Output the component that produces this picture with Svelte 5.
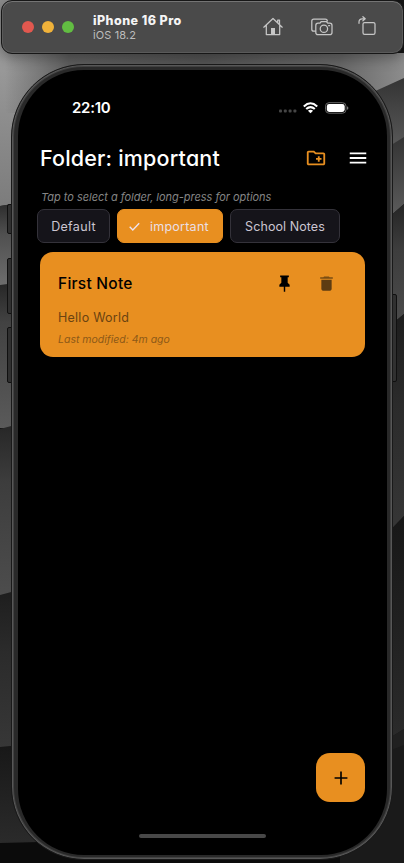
<script>
  const folders = [
    { name: 'Default', width: 73, spacing: 0.32 },
    { name: 'important', width: 106, spacing: 0.24, selected: true },
    { name: 'School Notes', width: 110, spacing: 0.08 }
  ];
</script>

<div class="desktop">
  <svg class="wallpaper" viewBox="0 0 404 863" aria-hidden="true">
    <defs>
      <linearGradient id="a" x2="0" y2="1"><stop stop-color="#8c8c8c"/><stop offset=".3" stop-color="#9a9a9a"/><stop offset=".6" stop-color="#8c8c8c"/><stop offset="1" stop-color="#7c7c7c"/></linearGradient>
      <linearGradient id="b" x2="0" y2="1"><stop stop-color="#292929"/><stop offset=".4" stop-color="#505050"/><stop offset="1" stop-color="#6d6d6d"/></linearGradient>
      <linearGradient id="c" x2="0" y2="1"><stop stop-color="#252525"/><stop offset=".28" stop-color="#424242"/><stop offset="1" stop-color="#5a5a5a"/></linearGradient>
      <linearGradient id="d" x2="0" y2="1"><stop stop-color="#252525"/><stop offset=".35" stop-color="#3d3d3d"/><stop offset="1" stop-color="#4d4d4d"/></linearGradient>
      <linearGradient id="e" x2="0" y2="1"><stop stop-color="#1d1d1d"/><stop offset=".4" stop-color="#2b2b2b"/><stop offset="1" stop-color="#373737"/></linearGradient>
      <linearGradient id="f" x2="0" y2="1"><stop stop-color="#171717"/><stop offset="1" stop-color="#2b2b2b"/></linearGradient>
      <linearGradient id="g" x2="0" y2="1"><stop stop-color="#343434"/><stop offset="1" stop-color="#606060"/></linearGradient>
      <linearGradient id="top"><stop stop-color="#5f5f5f" stop-opacity="0"/><stop offset=".16" stop-color="#5f5f5f"/><stop offset=".5" stop-color="#555"/><stop offset=".84" stop-color="#686868"/><stop offset="1" stop-color="#8c8c8c"/></linearGradient>
    </defs>
    <path fill="#151515" d="M0 0h404v863H0z"/>
    <path fill="url(#a)" d="M0 0h110v190L0 206z"/>
    <path fill="url(#b)" d="M0 206l30-5v84H0z"/>
    <path fill="url(#c)" d="M0 285l30-4v147H0z"/>
    <path fill="url(#d)" d="M0 429l30-8v172l-30 4z"/>
    <path fill="url(#e)" d="M0 595l30-8v161H0z"/>
    <path fill="url(#f)" d="M0 747l60-6v104H0z"/>
    <path fill="#0b0b0b" d="M0 843l404-10v30H0z"/>
    <path fill="url(#top)" d="M5 53h399v60H5z"/>
    <path fill="url(#g)" d="M360 98l44-20v64l-44 19z"/>
    <path fill="url(#g)" d="M380 152l24-15v67l-24 21z"/>
    <path fill="url(#d)" d="M380 225l24-21v110l-24 20z"/>
    <path fill="url(#e)" d="M380 334l24-20v202l-24 25z"/>
    <path fill="url(#f)" d="M380 541l24-25v213l-24 15z"/>
    <path fill="#202020" d="M380 744l24-15v30l-24 12z"/>
    <path fill="#1a1a1a" d="M340 770l64-25v118h-64z"/>
  </svg>

  <header class="toolbar">
    <div class="lights"><i></i><i></i><i></i></div>
    <div class="device"><strong>iPhone 16 Pro</strong><span>iOS 18.2</span></div>
    <div class="tools">
      <svg width="20" height="20" viewBox="0 0 20 20"><path d="M.8 10.2 10 1.500l9.2 8.7M3.3 8.3v9.3h13.400V8.3M14.700 5.500V3h1.800v4.500"/><path class="solid" d="M8 11h4v6.600H8z"/></svg>
      <svg width="22" height="20" viewBox="0 0 22 20"><path d="M4.500 14.200H2.800q-2 0-2-2V4q0-2 2-2h11.500q2 0 2 2"/><path d="M7 6.200h2l1.300-1.700h5L16.700 6.200h2.100q2.200 0 2.200 2.200v7q0 2.200-2.200 2.200H7q-2.200 0-2.200-2.200v-7Q4.800 6.200 7 6.200z"/><circle cx="12.900" cy="11.700" r="3.700"/><path d="M17.600 8.700h1"/></svg>
      <svg width="18" height="20" viewBox="0 0 18 20"><rect x="5" y="5.500" width="12" height="11.800" rx="1.600"/><path d="M1 6.300V5q0-3.200 3.200-3.200H7M4.900-.3 7.200 1.800 4.900 3.800"/></svg>
    </div>
  </header>

  <i class="key action"></i><i class="key up"></i><i class="key down"></i><i class="key power"></i>

  <main class="phone">
    <div class="screen">
      <div class="status">
        <time>22:10</time>
        <div class="signals">
          <svg width="18" height="6" viewBox="0 0 18 6" fill="#464646"><rect y="1.5" width="3" height="3" rx="1"/><rect x="4.8" y="1.5" width="3" height="3" rx="1"/><rect x="9.6" y="1.5" width="3" height="3" rx="1"/><rect x="14.4" y="1.5" width="3" height="3" rx="1"/></svg>
          <svg class="wifi" width="15" height="12" viewBox="0 0 15 12" fill="none" stroke="#fff" stroke-width="2.1"><path d="M.8 4.4q6.700-6.300 13.400 0M3.200 7q4.300-3.800 8.600 0"/><path fill="#fff" stroke="none" d="M4.900 8.800q2.600-2 5.200 0L7.500 11.300z"/></svg>
          <svg width="24" height="12" viewBox="0 0 24 12"><rect x=".5" y=".7" width="20.500" height="10.500" rx="3.500" fill="none" stroke="#666"/><rect x="1.800" y="2" width="17.900" height="7.900" rx="2.400" fill="#fff"/><path fill="#777" d="M22 4.200q1.400.4 1.400 1.800T22 7.800z"/></svg>
        </div>
      </div>

      <div class="heading">
        <h1>Folder: important</h1>
        <svg width="22" height="22" viewBox="0 0 24 24" fill="#e88f20"><path d="M20 6h-8l-2-2H4c-1.100 0-2 .9-2 2v12c0 1.100.9 2 2 2h16c1.100 0 2-.9 2-2V8c0-1.100-.9-2-2-2zm0 12H4V6h5.200l2 2H20v10zm-8-4h2v2h2v-2h2v-2h-2v-2h-2v2h-2z"/></svg>
        <svg width="22" height="22" viewBox="0 0 24 24" fill="#fff"><path d="M3 18h18v-2H3v2zm0-5h18v-2H3v2zm0-7v2h18V6H3z"/></svg>
      </div>

      <p class="hint">Tap to select a folder, long-press for options</p>

      <nav>
        {#each folders as folder}
          <button class:selected={folder.selected} style="width: {folder.width}px; letter-spacing: {folder.spacing}px">
            {#if folder.selected}
              <svg width="13" height="13" viewBox="0 0 13 13"><path d="m1.700 6.800 3.100 3.100 6.400-6.700" fill="none" stroke="#eee3ef" stroke-width="1.400"/></svg>
            {/if}
            <span>{folder.name}</span>
          </button>
        {/each}
      </nav>

      <article>
        <div class="note-head">
          <h2>First Note</h2>
          <svg width="19" height="19" viewBox="0 0 24 24"><path d="M16 11V4h1.500V2h-11v2H8v7l-2.500 2.500V16h5.600v6.500h1.800V16h5.600v-2.500z"/></svg>
          <svg width="19" height="19" viewBox="0 0 24 24" fill="#5d3c12"><path d="M5.500 7.200V19c0 1.100.9 2 2 2h9c1.100 0 2-.9 2-2V7.200z"/><path opacity=".8" d="M20 4h-4l-1-1H9L8 4H4v2h16z"/></svg>
        </div>
        <p class="body">Hello World</p>
        <p class="modified">Last modified: 4m ago</p>
      </article>

      <div class="spacer"></div>
      <button class="add" aria-label="Add"><svg width="22" height="22" viewBox="0 0 24 24"><path d="M19 12.900h-6.100V19h-1.800v-6.100H5v-1.800h6.100V5h1.800v6.100H19z"/></svg></button>
      <div class="home"></div>
    </div>
  </main>
</div>

<style>
  :global(body) { margin: 0; background: #000; }
  * { box-sizing: border-box; }
  h1, h2, p { margin: 0; white-space: nowrap; }
  svg { display: block; flex: none; }
  .desktop { position: relative; width: 404px; height: 863px; overflow: hidden; font-family: Inter, "Liberation Sans", sans-serif; }
  .wallpaper { position: absolute; inset: 0; width: 404px; height: 863px; }
  .toolbar { position: relative; height: 54px; margin: 0 0 0 1px; padding: 0 27px 0 20px; display: flex; align-items: center; border: 1px solid #171717; border-radius: 11px; background: #4a4a4a; box-shadow: inset 0 1px #747474, inset 0 0 0 1px #5a5a5a, 0 4px 14px #0005; }
  .lights { display: flex; gap: 8px; }
  .lights i { width: 12px; height: 12px; border-radius: 50%; background: #e1584f; }
  .lights i:nth-child(2) { background: #f0b23a; }
  .lights i:nth-child(3) { background: #62bd42; }
  .device { margin-left: 19px; display: flex; flex-direction: column; color: #bdbdbd; font-size: 11px; line-height: 14px; letter-spacing: .1px; white-space: nowrap; }
  .device strong { color: #f5f5f5; font-size: 12.5px; line-height: 15px; font-weight: 800; letter-spacing: .45px; }
  .tools { margin-left: auto; display: flex; gap: 28px; }
  .tools svg:last-child { margin-left: -3px; }
  .tools svg { fill: none; stroke: #c6c6c6; stroke-width: 1.25; stroke-linejoin: round; stroke-linecap: round; overflow: visible; }
  .tools .solid { fill: #c6c6c6; stroke: none; }
  .key { position: absolute; left: 7px; width: 7px; border: 1px solid #101010; border-radius: 2px 0 0 2px; background: #303030; }
  .action { top: 204px; height: 30px; }
  .up { top: 258px; height: 56px; }
  .down { top: 327px; height: 56px; }
  .power { left: 390px; top: 294px; height: 88px; border-radius: 0 2px 2px 0; }
  .phone { position: relative; width: 382px; height: 796px; margin: 10px 0 0 11px; padding: 5px 5px 5px 6px; border: 1px solid #191919; border-radius: 73px; background: #292929; box-shadow: inset 0 0 0 1px #575757, inset 0 0 0 2px #414141; }
  .screen { height: 785px; padding-top: 22px; display: flex; flex-direction: column; border-radius: 66px; background: #000; }
  .status { height: 31px; flex: none; padding: 0 38px 0 54px; display: flex; align-items: center; justify-content: space-between; }
  time { color: #fff; font-size: 15px; font-weight: 600; letter-spacing: -.25px; }
  .signals { display: flex; align-items: center; gap: 6px; }
  .signals svg:first-child { margin-top: 7px; }
  .signals .wifi { margin-right: 1px; }
  .heading { height: 32px; margin-top: 19px; padding: 0 18px 0 22px; display: flex; align-items: center; }
  h1 { margin-right: auto; color: #fff; font-size: 21.5px; line-height: 30px; font-weight: 500; letter-spacing: .18px; font-feature-settings: "cv11"; }
  .heading svg + svg { margin-left: 20px; }
  .hint { height: 18px; margin: 14px 0 0 23px; color: #858585; font-size: 11px; line-height: 18px; font-style: italic; font-feature-settings: "cv11"; letter-spacing: -.02px; }
  nav { margin: 3px 0 0 19px; display: flex; gap: 7px; }
  nav button { height: 34px; padding: 0; display: flex; align-items: center; justify-content: center; border: 1px solid #34323a; border-radius: 7px; color: #cbc5d1; background: #15141a; font: 400 12.5px Inter, sans-serif; white-space: nowrap; }
  nav button.selected { justify-content: flex-start; padding-left: 10px; gap: 9px; border-color: #e88f20; color: #eadfe6; background: #e88f20; }
  article { width: 325px; height: 105px; flex: none; margin: 9px 0 0 22px; padding: 18px 29px 0 18px; border-radius: 13px; background: #e88f20; font-feature-settings: "cv11"; }
  .note-head { height: 27px; display: flex; align-items: center; }
  h2 { margin-right: auto; font-size: 15.5px; line-height: 26px; font-weight: 550; letter-spacing: .25px; }
  .note-head svg + svg { margin-left: 23px; }
  .body { margin-top: 11px; color: #6b4311; font-size: 12.5px; line-height: 20px; letter-spacing: .25px; }
  .modified { margin-top: 4px; color: #8c5918; font-size: 10.5px; line-height: 16px; font-style: italic; }
  .spacer { flex: 1; }
  .add { width: 49px; height: 49px; flex: none; margin: 0 22px 32px auto; padding: 0; display: grid; place-items: center; border: 0; border-radius: 14px; background: #e88f20; }
  .home { width: 127px; height: 4px; flex: none; margin: 0 auto 17px; border-radius: 2px; background: #484848; }
</style>
